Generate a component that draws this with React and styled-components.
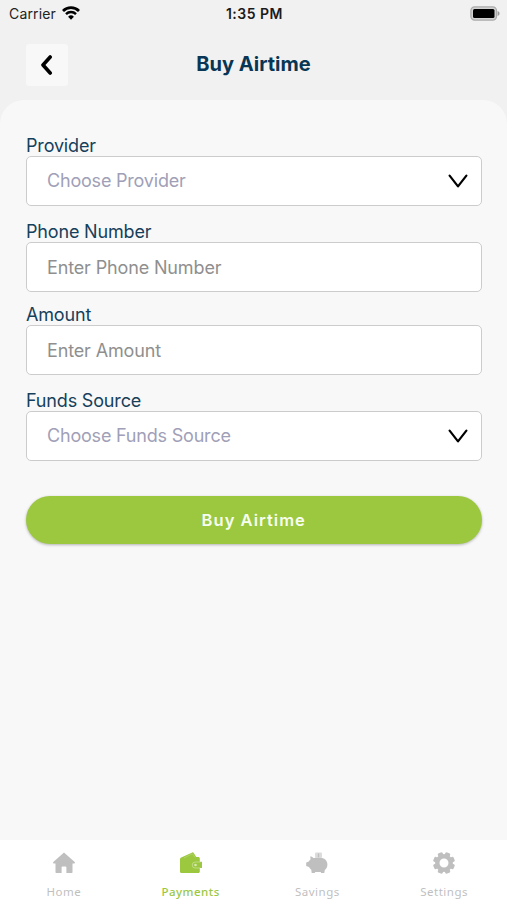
import { useState } from 'react'
import styled, { createGlobalStyle } from 'styled-components'

const GlobalStyle = createGlobalStyle`
  * {
    box-sizing: border-box;
  }

  body {
    margin: 0;
    background: #f8f8f8;
    font-family: Inter, 'Liberation Sans', sans-serif;
  }
`

const Screen = styled.div`
  width: 100%;
  height: 100vh;
  display: flex;
  flex-direction: column;
  background: #f1f1f1;
`

const StatusBar = styled.div`
  height: 28px;
  padding: 0 7px 2px 9px;
  display: grid;
  grid-template-columns: 1fr auto 1fr;
  align-items: center;
  color: #222;
  font-size: 14px;
`

const Carrier = styled.div`
  display: flex;
  align-items: center;
  gap: 6px;
  letter-spacing: 0.15px;
`

const Clock = styled.div`
  color: #1b1b1b;
  font-weight: 600;
  font-size: 14px;
  letter-spacing: 0.5px;
`

const Battery = styled.div`
  display: flex;
  justify-content: flex-end;
`

const Header = styled.header`
  height: 72px;
  padding: 16px 26px 0;
  display: grid;
  grid-template-columns: 42px 1fr 42px;
  align-items: start;
`

const BackButton = styled.button`
  width: 42px;
  height: 42px;
  padding: 0;
  border: none;
  border-radius: 3px;
  background: #f8f8f8;
  display: flex;
  align-items: center;
  justify-content: center;
  cursor: pointer;
`

const Title = styled.h1`
  margin: 0;
  text-align: center;
  color: #083654;
  font-size: 20px;
  font-weight: 700;
  line-height: 40px;
`

const Sheet = styled.main`
  flex: 1;
  padding: 35px 25.5px 0 26px;
  border-radius: 24px 24px 0 0;
  background: #f8f8f8;
`

const Field = styled.div`
  margin-bottom: ${({ $gap }) => $gap}px;
`

const Label = styled.label`
  display: block;
  height: 21px;
  line-height: 21px;
  color: #15405c;
  font-size: 18px;
  letter-spacing: -0.17px;
`

const Box = styled.div`
  height: 50px;
  padding: 0 13px 1px 20px;
  display: flex;
  align-items: center;
  justify-content: space-between;
  border: 1.5px solid #cccccc;
  border-radius: 5px;
  background: #fff;
`

const Placeholder = styled.span`
  color: #9fa0b8;
  font-size: 18px;
  letter-spacing: -0.2px;
`

const Input = styled.input`
  width: 100%;
  padding: 2px 0 0;
  border: none;
  outline: none;
  background: transparent;
  color: #333;
  font-family: inherit;
  font-size: 18px;
  letter-spacing: -0.14px;

  &::placeholder {
    color: #8f8f8f;
    opacity: 1;
  }
`

const SubmitButton = styled.button`
  width: 100%;
  height: 48px;
  padding: 0 0 1px;
  border: none;
  border-radius: 24px;
  background: #9bc83f;
  box-shadow: 0 1px 3px rgba(0, 0, 0, 0.28);
  color: #f7fff0;
  font-family: Inter, 'Liberation Sans', sans-serif;
  font-size: 16.5px;
  font-weight: 600;
  letter-spacing: 1.05px;
  cursor: pointer;
`

const TabBar = styled.nav`
  height: 60px;
  display: grid;
  grid-template-columns: repeat(4, 1fr);
  background: #fff;
`

const Tab = styled.button`
  padding: 12px 0 0 1px;
  border: none;
  background: none;
  display: flex;
  flex-direction: column;
  align-items: center;
  gap: 9px;
  color: ${({ $active }) => ($active ? '#9bc83f' : '#bfbfbf')};
  cursor: pointer;
`

const TabLabel = styled.span`
  font-family: 'Noto Sans', sans-serif;
  font-size: 11.5px;
  font-weight: ${({ $active }) => ($active ? 500 : 400)};
  line-height: 18px;
  letter-spacing: 0.5px;
`

const WifiIcon = () => (
  <svg width="18" height="14" viewBox="0 0 18 14" fill="none" stroke="#000">
    <path d="M1 4.9a11.4 11.4 0 0 1 16 0" strokeWidth="2.8" />
    <path d="M4 8.1a7.1 7.1 0 0 1 10 0" strokeWidth="2.4" />
    <path d="M9 13.8l-2.9-3a4.1 4.1 0 0 1 5.8 0z" fill="#000" stroke="none" />
  </svg>
)

const BatteryIcon = () => (
  <svg width="30" height="15" viewBox="0 0 30 15">
    <rect x="0.9" y="0.9" width="25.6" height="13.2" rx="3.8" fill="#d2d2d2" stroke="#aaa" strokeWidth="1.3" />
    <rect x="3" y="3" width="21.5" height="9" rx="1.5" fill="#000" />
    <path d="M27.6 5c2.6.7 2.6 4.3 0 5z" fill="#999" />
  </svg>
)

const BackIcon = () => (
  <svg width="14" height="20" viewBox="0 0 14 20">
    <path d="M10.2 2L3 10l7.2 8" fill="none" stroke="#000" strokeWidth="3.6" strokeLinecap="round" strokeLinejoin="round" />
  </svg>
)

const ChevronIcon = () => (
  <svg width="20" height="14" viewBox="0 0 20 14">
    <path d="M1.6 1.6L10 12.4l8.4-10.8" fill="none" stroke="#000" strokeWidth="2.2" strokeLinecap="round" strokeLinejoin="round" />
  </svg>
)

const HomeIcon = () => (
  <svg width="22" height="22" viewBox="0 0 22 22" fill="currentColor">
    <path d="M11 .5L.3 10.1c-.5.6-.2 1.300.5 1.300h1.700v8.900c0 .5.3.8.8.8h5.300v-5.800c0-.6.3-.9.9-.9h3c.6 0 .9.3.9.9v5.800h5.300c.5 0 .8-.3.8-.8v-8.900h1.700c.7 0 1-.7.5-1.300z" />
  </svg>
)

const WalletIcon = () => (
  <svg width="22" height="22" viewBox="0 0 22 22" fill="currentColor">
    <path d="M1.2 5.6L12.300.5c.6-.3 1.100-.1 1.400.4L16.300 5h2c.9 0 1.500.6 1.500 1.500v3.300H22v6.200h-2.200v3.600c0 .9-.6 1.500-1.500 1.500H1.800C.7 21.100 0 20.400 0 19.400V7.300C0 6.500.5 5.900 1.200 5.600z" />
    <path d="M4 5.900L12.400 1.800 15 5.400" fill="none" stroke="#fff" strokeWidth="0.5" opacity="0.4" />
    <path d="M20.500 10h-5.300a3 3 0 0 0 0 6h5.300" fill="none" stroke="#fff" strokeWidth="0.7" opacity="0.5" />
    <circle cx="15.500" cy="13" r="1.300" fill="#fff" opacity="0.6" />
  </svg>
)

const PiggyIcon = () => (
  <svg width="22" height="22" viewBox="0 0 22 22" fill="currentColor">
    <path d="M4.200 4.500c1.500 0 2.600.6 3.300 1.600 1.300-.3 2.500-.4 4.500-.4h2c4.200 0 7.400 2.700 7.400 6.700 0 2.300-1 4.200-2.600 5.500l-.5 3.200h-3.100l-.5-1.200H9.400l-.8 1.200H5.700l-.4-3.400c-1-.7-1.800-1.600-2.300-2.700L.2 14v-3.600l2.700-.8c.4-.9 1-1.700 1.700-2.400z" />
    <rect x="9" y="0.5" width="7" height="5.200" rx="1" opacity="0.550" />
    <path d="M12.500 1.500v3.800" stroke="currentColor" strokeWidth="1.400" />
  </svg>
)

const GearIcon = () => (
  <svg width="22" height="22" viewBox="0 0 22 22" fill="currentColor">
    <g>
      {[0, 45, 90, 135, 180, 225, 270, 315].map((angle) => (
        <rect key={angle} x="8.4" y="0" width="5.2" height="5" rx="1.4" transform={`rotate(${angle + 22.5} 11 11)`} />
      ))}
    </g>
    <circle cx="11" cy="11" r="6.7" fill="none" stroke="currentColor" strokeWidth="4.4" />
  </svg>
)

const tabs = [
  { name: 'Home', Icon: HomeIcon },
  { name: 'Payments', Icon: WalletIcon },
  { name: 'Savings', Icon: PiggyIcon },
  { name: 'Settings', Icon: GearIcon },
]

const App = () => {
  const [active, setActive] = useState('Payments')

  return (
    <>
      <GlobalStyle />
      <Screen>
        <StatusBar>
          <Carrier>
            Carrier
            <WifiIcon />
          </Carrier>
          <Clock>1:35 PM</Clock>
          <Battery>
            <BatteryIcon />
          </Battery>
        </StatusBar>

        <Header>
          <BackButton aria-label="Back">
            <BackIcon />
          </BackButton>
          <Title>Buy Airtime</Title>
        </Header>

        <Sheet>
          <Field $gap={15}>
            <Label>Provider</Label>
            <Box>
              <Placeholder>Choose Provider</Placeholder>
              <ChevronIcon />
            </Box>
          </Field>
          <Field $gap={12}>
            <Label htmlFor="phone">Phone Number</Label>
            <Box>
              <Input id="phone" type="tel" placeholder="Enter Phone Number" />
            </Box>
          </Field>
          <Field $gap={15}>
            <Label htmlFor="amount">Amount</Label>
            <Box>
              <Input id="amount" inputMode="decimal" placeholder="Enter Amount" />
            </Box>
          </Field>
          <Field $gap={35}>
            <Label>Funds Source</Label>
            <Box>
              <Placeholder>Choose Funds Source</Placeholder>
              <ChevronIcon />
            </Box>
          </Field>
          <SubmitButton>Buy Airtime</SubmitButton>
        </Sheet>

        <TabBar>
          {tabs.map(({ name, Icon }) => (
            <Tab key={name} $active={active === name} onClick={() => setActive(name)}>
              <Icon />
              <TabLabel $active={active === name}>{name}</TabLabel>
            </Tab>
          ))}
        </TabBar>
      </Screen>
    </>
  )
}

export default App
